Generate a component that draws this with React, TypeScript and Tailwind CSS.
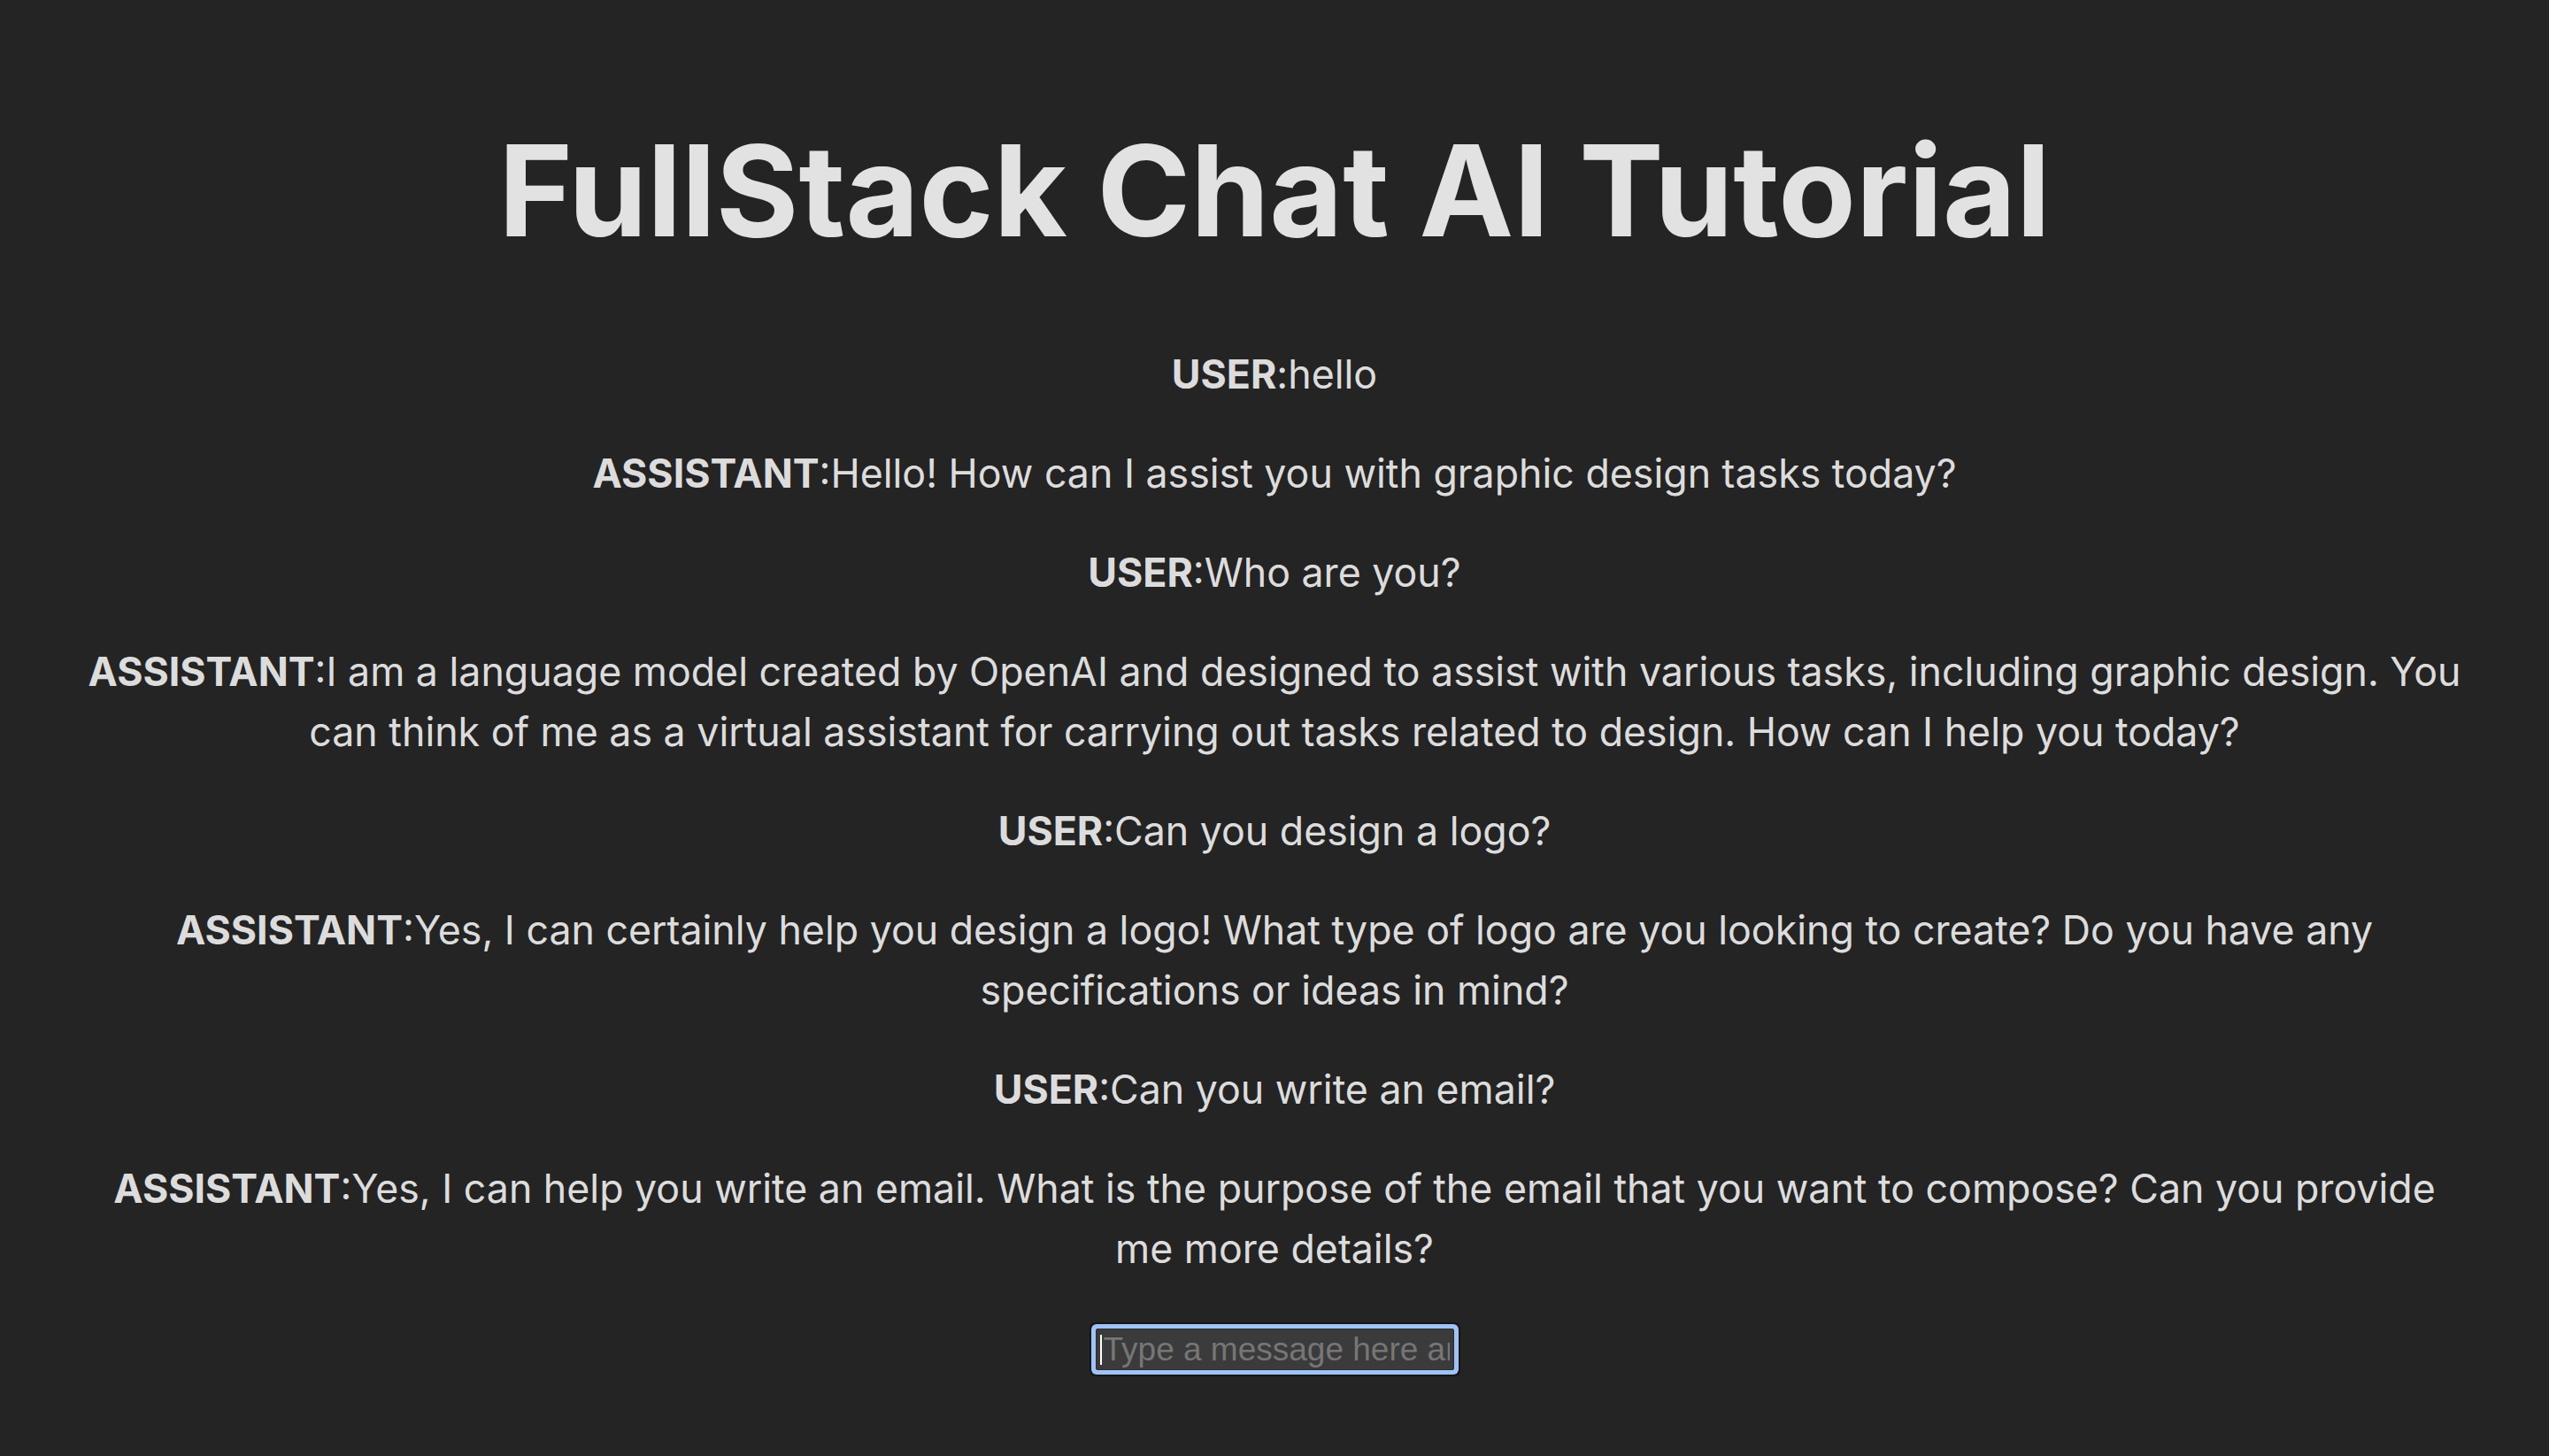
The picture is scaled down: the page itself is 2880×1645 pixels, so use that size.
import { useState } from 'react';

type Message = { role: 'USER' | 'ASSISTANT'; content: string };

const messages: Message[] = [
  { role: 'USER', content: 'hello' },
  { role: 'ASSISTANT', content: 'Hello! How can I assist you with graphic design tasks today?' },
  { role: 'USER', content: 'Who are you?' },
  {
    role: 'ASSISTANT',
    content:
      'I am a language model created by OpenAI and designed to assist with various tasks, including graphic design. You can think of me as a virtual assistant for carrying out tasks related to design. How can I help you today?',
  },
  { role: 'USER', content: 'Can you design a logo?' },
  {
    role: 'ASSISTANT',
    content:
      'Yes, I can certainly help you design a logo! What type of logo are you looking to create? Do you have any specifications or ideas in mind?',
  },
  { role: 'USER', content: 'Can you write an email?' },
  {
    role: 'ASSISTANT',
    content:
      'Yes, I can help you write an email. What is the purpose of the email that you want to compose? Can you provide me more details?',
  },
];

export default function App() {
  const [value, setValue] = useState('');

  return (
    <div className="min-h-screen bg-[#242424] text-white/87 font-['Inter',sans-serif] px-[90px] pt-[136px] pb-[80px] text-center">
      <h1 className="text-[143px] leading-[158px] font-bold">FullStack Chat AI Tutorial</h1>

      <div className="mt-[95px] flex flex-col gap-[44px] text-[44.7px] leading-[68px]">
        {messages.map((m, i) => (
          <p key={i}>
            <strong className="font-bold">{m.role}</strong>:{m.content}
          </p>
        ))}
      </div>

      <div className="mt-[56px] flex justify-center">
        <div className="relative">
          <input
            value={value}
            onChange={(e) => setValue(e.target.value)}
            placeholder="Type a message here and hit Enter..."
            className="block w-[405px] h-[47px] rounded-[2px] bg-[#3b3b3b] border border-[#2e2e2e] pl-[8px] pr-[4px] font-['Liberation_Sans',Arial,sans-serif] text-[37px] text-white placeholder:text-[#767676] outline-none ring-[5px] ring-[#9fc3f6] shadow-[0_0_0_7px_#161616]"
          />
          <span className="absolute left-[5px] top-[7px] h-[34px] w-[2px] bg-white" />
        </div>
      </div>
    </div>
  );
}
